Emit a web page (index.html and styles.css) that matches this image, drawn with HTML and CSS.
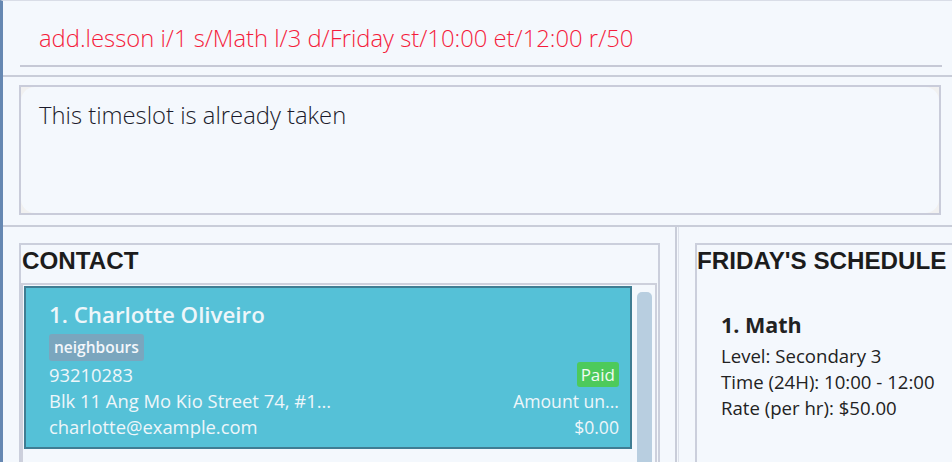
FILE: index.html
```html
<!DOCTYPE html>
<html>
<head>
<meta charset="utf-8">
<link rel="stylesheet" href="styles.css">
</head>
<body>
<div class="app">
  <div class="command">
    <div class="command-field">add.lesson i/1 s/Math l/3 d/Friday st/10:00 et/12:00 r/50</div>
  </div>
  <div class="result">
    <div class="result-box">
      <div class="result-inner">This timeslot is already taken</div>
    </div>
  </div>
  <div class="split">
    <div class="pane left-pane">
      <div class="panel contact-panel">
        <div class="panel-title">CONTACT</div>
        <div class="list">
          <div class="card">
            <div class="card-main">
              <div class="name">1. Charlotte Oliveiro</div>
              <div class="tags"><span class="tag">neighbours</span></div>
              <div class="line">93210283</div>
              <div class="line">Blk 11 Ang Mo Kio Street 74, #1...</div>
              <div class="line">charlotte@example.com</div>
            </div>
            <div class="card-side">
              <span class="paid">Paid</span>
              <div class="line">Amount un...</div>
              <div class="line">$0.00</div>
            </div>
          </div>
          <div class="scrollbar"></div>
        </div>
      </div>
    </div>
    <div class="divider"></div>
    <div class="pane right-pane">
      <div class="panel schedule-panel">
        <div class="panel-title">FRIDAY'S SCHEDULE</div>
        <div class="lesson">
          <div class="lesson-title">1. Math</div>
          <div class="lesson-line">Level: Secondary 3</div>
          <div class="lesson-line">Time (24H): 10:00 - 12:00</div>
          <div class="lesson-line">Rate (per hr): $50.00</div>
        </div>
      </div>
    </div>
  </div>
</div>
</body>
</html>
```
FILE: styles.css
```css
html, body {
  margin: 0;
  padding: 0;
  height: 100%;
  overflow: hidden;
}
body {
  background: #f4f8fd;
  font-family: "Open Sans", "Noto Sans", sans-serif;
}
.app {
  height: 462px;
  display: flex;
  flex-direction: column;
  border-left: 3px solid #6688b2;
  border-top: 1px solid #d9dde7;
  box-sizing: border-box;
}
.command {
  flex: none;
  height: 76px;
  padding: 0 10px 0 17px;
  border-bottom: 2px solid #c9cdd9;
  box-sizing: border-box;
}
.command-field {
  height: 66px;
  box-sizing: border-box;
  border-bottom: 2px solid #c6c9d6;
  padding: 21px 0 0 19px;
  color: #f41c3c;
  font-size: 23.8px;
  font-weight: 300;
  white-space: nowrap;
}
.result {
  flex: none;
  height: 150px;
  box-sizing: border-box;
  padding: 8px 11px 10px 16px;
  border-bottom: 2px solid #c9cdd9;
}
.result-box {
  height: 100%;
  box-sizing: border-box;
  border: 2px solid #c9ccda;
  background: #f1f1f1;
}
.result-inner {
  height: 100%;
  box-sizing: border-box;
  background: #f4f8fd;
  border-radius: 14px;
  padding: 12px 18px;
  color: #1b1b2b;
  font-size: 23.8px;
  font-weight: 300;
  white-space: nowrap;
}
.split {
  flex: 1;
  display: flex;
  min-height: 0;
}
.pane {
  padding: 16px 15px 0 16px;
  box-sizing: border-box;
  min-width: 0;
}
.left-pane {
  width: 672px;
  flex: none;
}
.divider {
  width: 4px;
  flex: none;
  border-left: 2px solid #c9cdd9;
  border-right: 1px solid #dde1ea;
  box-sizing: border-box;
}
.right-pane {
  flex: 1;
  padding-right: 0;
}
.panel {
  height: 100%;
  box-sizing: border-box;
  border: 2px solid #cbcfdc;
  border-bottom: none;
  display: flex;
  flex-direction: column;
}
.schedule-panel {
  border-right: none;
  width: 300px;
}
.panel-title {
  font-family: "Liberation Sans", Arial, sans-serif;
  font-weight: bold;
  font-size: 24.2px;
  color: #1c1c1c;
  padding: 2px 0 0 1px;
  height: 38px;
  box-sizing: border-box;
  white-space: nowrap;
}
.schedule-panel .panel-title {
  padding-left: 0;
}
.list {
  flex: 1;
  border: 2px solid #cdd0dc;
  border-bottom: none;
  margin: 0 1px 0 0;
  display: flex;
  padding: 1px 4px 0 1px;
  gap: 5px;
  min-height: 0;
}
.card {
  width: 608px;
  height: 163px;
  box-sizing: border-box;
  background: #55c1d7;
  border: 2px solid #3f7d93;
  display: flex;
  justify-content: space-between;
  padding: 12px 11px 0 23px;
  color: #eef6fa;
  flex: none;
}
.name {
  font-size: 22.3px;
  font-weight: 600;
  line-height: 30px;
}
.tags {
  margin-top: 4px;
  height: 28px;
}
.tag {
  display: inline-block;
  background: #7aa6be;
  color: #f3f7fb;
  font-size: 15.5px;
  font-weight: 600;
  padding: 0 5px;
  height: 27px;
  line-height: 27px;
  border-radius: 3px;
}
.line {
  font-size: 18.4px;
  line-height: 26px;
  white-space: nowrap;
}
.card-side .line {
  font-size: 17.6px;
}
.card-side {
  display: flex;
  flex-direction: column;
  align-items: flex-end;
  padding-top: 62px;
}
.paid {
  display: inline-block;
  background: #4dca5b;
  color: #f2fbf2;
  font-size: 17px;
  padding: 0 4px;
  height: 25px;
  line-height: 25px;
  border-radius: 3px;
  margin-bottom: 1px;
}
.scrollbar {
  width: 15px;
  margin-top: 6px;
  background: #b8cee0;
  border-radius: 5px 5px 0 0;
  flex: none;
}
.lesson {
  padding: 27px 0 0 24px;
  color: #222;
}
.lesson-title {
  font-size: 21.5px;
  font-weight: bold;
  line-height: 30px;
  margin-bottom: 3px;
}
.lesson-line {
  font-size: 18.6px;
  line-height: 26px;
  white-space: nowrap;
}
```
